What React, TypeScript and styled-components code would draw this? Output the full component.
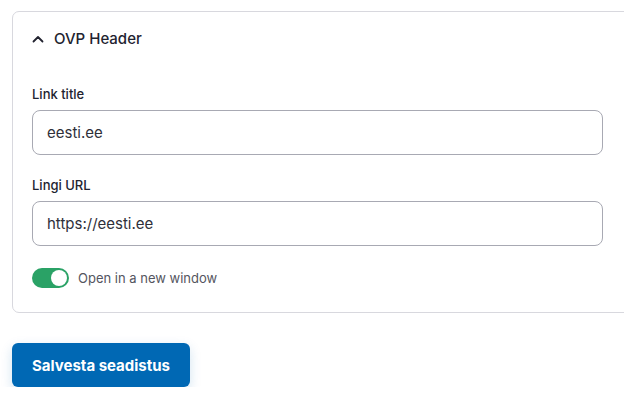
import styled, { createGlobalStyle } from 'styled-components';

const GlobalStyle = createGlobalStyle`
  html, body {
    margin: 0;
    padding: 0;
    background: #ffffff;
    overflow: hidden;
  }
  body {
    font-family: Inter, 'Noto Sans', sans-serif;
    color: #222330;
  }
`;

const App = (): JSX.Element => {
  return (
    <Page>
      <GlobalStyle />
      <Card>
        <CardHeader>
          <Chevron viewBox='0 0 12 8' aria-hidden='true'>
            <path d='M1.5 6.5 6 2l4.5 4.5' />
          </Chevron>
          <HeaderTitle>OVP Header</HeaderTitle>
        </CardHeader>
        <CardBody>
          <Field>
            <Label>Link title</Label>
            <Input defaultValue='eesti.ee' />
          </Field>
          <Field>
            <Label>Lingi URL</Label>
            <Input defaultValue='https://eesti.ee' />
          </Field>
          <ToggleRow>
            <Toggle $on>
              <Knob $on />
            </Toggle>
            <ToggleLabel>Open in a new window</ToggleLabel>
          </ToggleRow>
        </CardBody>
      </Card>
      <SaveButton>Salvesta seadistus</SaveButton>
    </Page>
  );
};

const Page = styled.main`
  padding: 11px 0 0 12px;
`;

const Card = styled.section`
  width: 640px;
  border: 1px solid #d8d8de;
  border-radius: 7px;
  box-sizing: border-box;
`;

const CardHeader = styled.div`
  display: flex;
  align-items: center;
  gap: 10px;
  height: 53px;
  padding-left: 19px;
  box-sizing: border-box;
`;

const Chevron = styled.svg`
  width: 12px;
  height: 8px;
  fill: none;
  stroke: #222330;
  stroke-width: 1.8;
  stroke-linecap: round;
  stroke-linejoin: round;
`;

const HeaderTitle = styled.h2`
  margin: 0;
  font-size: 15px;
  font-weight: 500;
  color: #222330;
  line-height: 20px;
`;

const CardBody = styled.div`
  display: flex;
  flex-direction: column;
  gap: 21px;
  padding: 20px 0 24px 19px;
`;

const Field = styled.div`
  display: flex;
  flex-direction: column;
  gap: 7px;
`;

const Label = styled.label`
  font-size: 13px;
  font-weight: 500;
  line-height: 18px;
  color: #222330;
`;

const Input = styled.input`
  width: 571px;
  height: 45px;
  box-sizing: border-box;
  border: 1px solid #a8a9b3;
  border-radius: 8px;
  padding: 0 14px;
  font-family: Inter, 'Noto Sans', sans-serif;
  font-size: 15px;
  color: #2f303a;
  background: #ffffff;
  outline: none;
`;

const ToggleRow = styled.div`
  display: flex;
  align-items: center;
  gap: 9px;
  margin-top: 1px;
`;

const Toggle = styled.span<{ $on?: boolean }>`
  position: relative;
  display: inline-block;
  width: 37px;
  height: 20px;
  border-radius: 10px;
  background: ${(p) => (p.$on ? '#2aa266' : '#c4c5cc')};
`;

const Knob = styled.span<{ $on?: boolean }>`
  position: absolute;
  top: 2px;
  left: ${(p) => (p.$on ? '19px' : '2px')};
  width: 16px;
  height: 16px;
  border-radius: 50%;
  background: #ffffff;
`;

const ToggleLabel = styled.span`
  font-size: 13px;
  color: #545560;
  line-height: 18px;
`;

const SaveButton = styled.button`
  display: block;
  margin-top: 30px;
  width: 178px;
  height: 44px;
  border: none;
  border-radius: 6px;
  background: #0068b4;
  color: #ffffff;
  font-family: Inter, 'Noto Sans', sans-serif;
  font-size: 15px;
  font-weight: 700;
  box-shadow: 0 4px 12px rgba(0, 104, 180, 0.18);
  cursor: pointer;
`;

export default App;
